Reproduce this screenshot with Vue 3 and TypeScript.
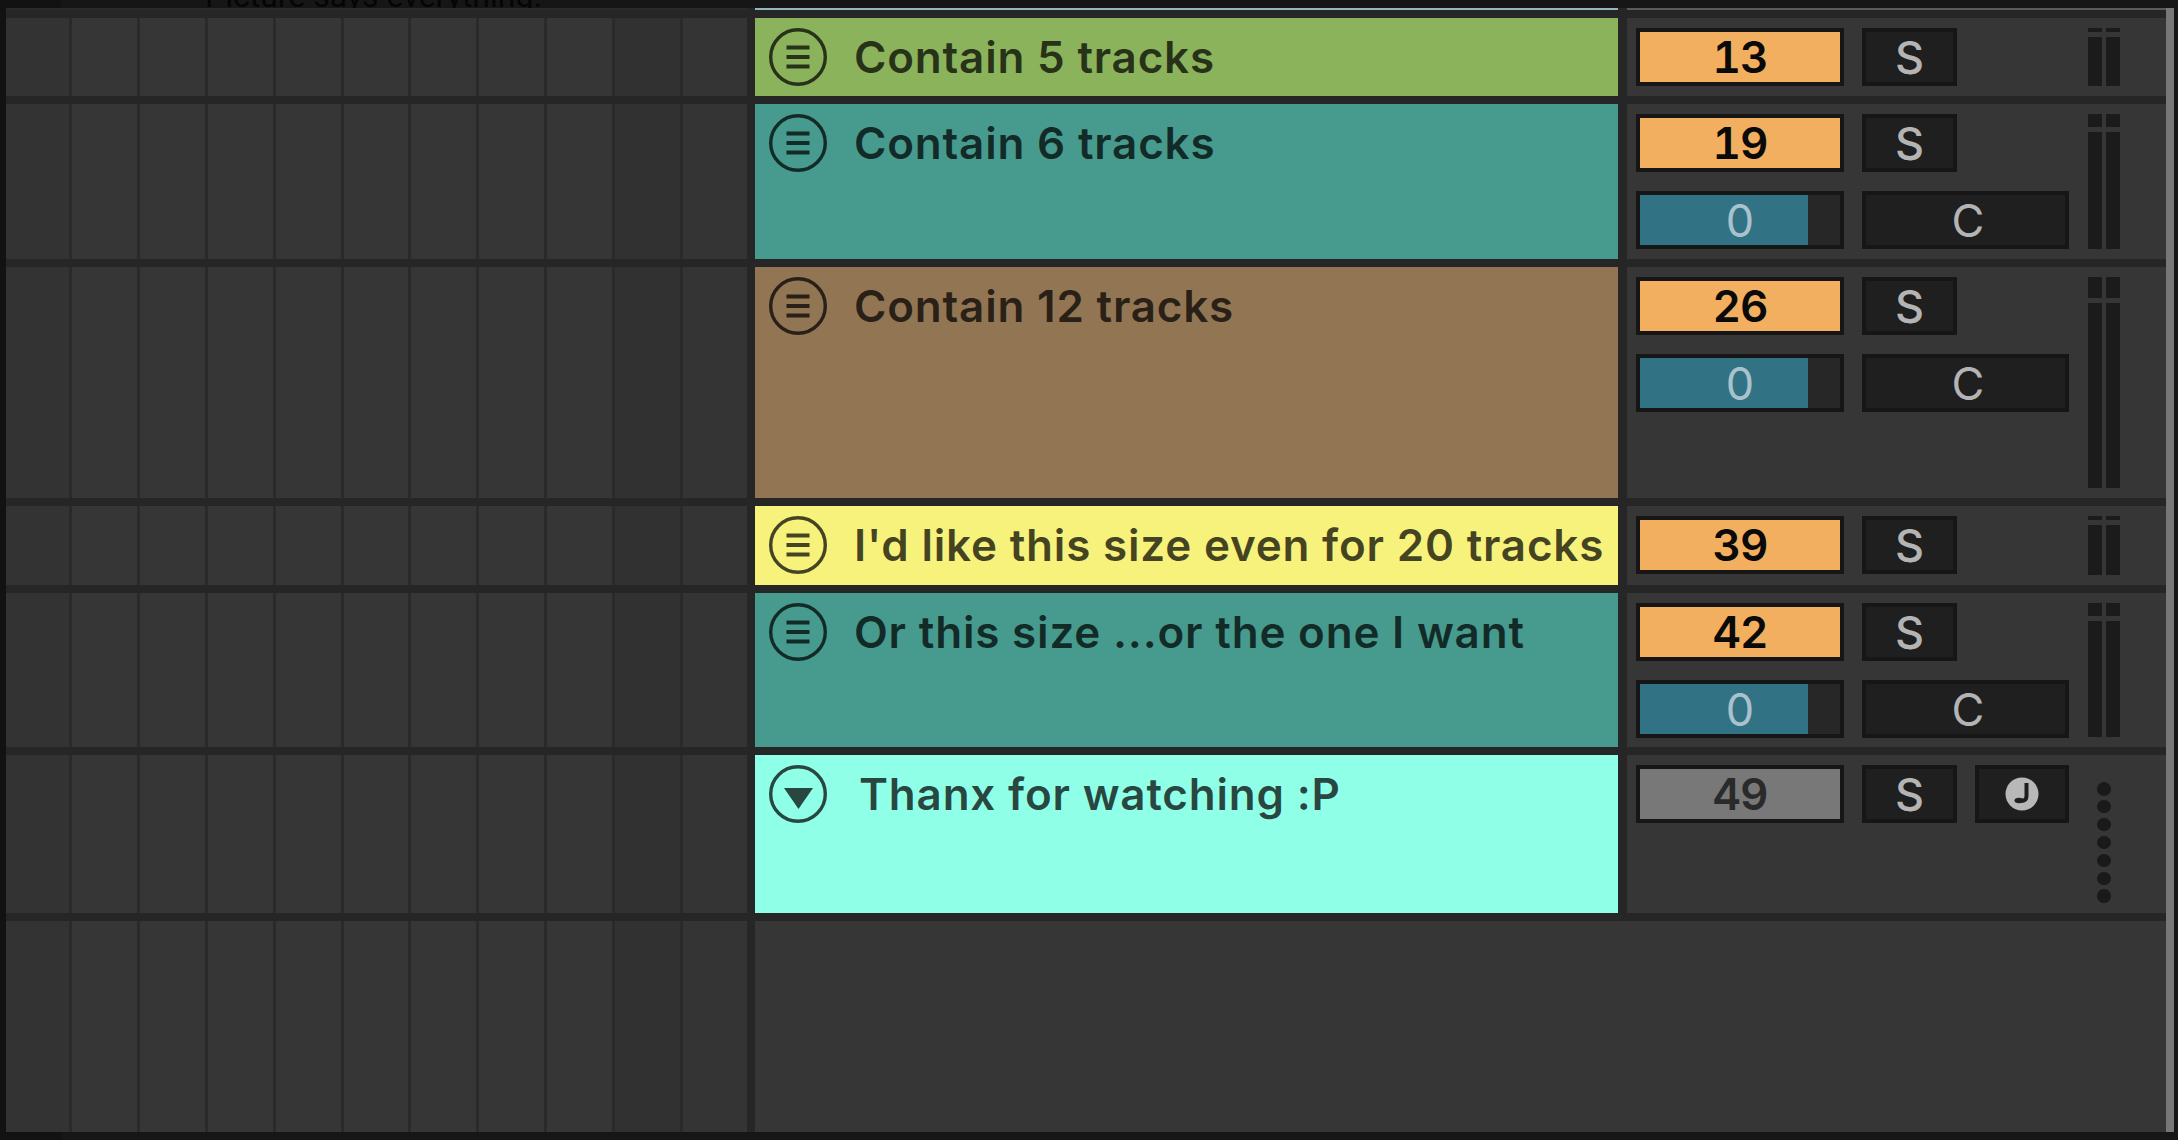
<script setup lang="ts">
interface Track {
  name: string
  color: string
  height: number
  value: number
  send: boolean
  meterCap: number
  icon: 'menu' | 'down'
  muted?: boolean
}

const tracks: Track[] = [
  { name: 'Contain 5 tracks', color: '#8bb35c', height: 78, value: 13, send: false, meterCap: 4, icon: 'menu' },
  { name: 'Contain 6 tracks', color: '#479a8e', height: 155, value: 19, send: true, meterCap: 13, icon: 'menu' },
  { name: 'Contain 12 tracks', color: '#927553', height: 231, value: 26, send: true, meterCap: 21, icon: 'menu' },
  { name: "I'd like this size even for 20 tracks", color: '#f6f27c', height: 79, value: 39, send: false, meterCap: 4, icon: 'menu' },
  { name: 'Or this size ...or the one I want', color: '#479a8e', height: 154, value: 42, send: true, meterCap: 13, icon: 'menu' },
  { name: 'Thanx for watching :P', color: '#90ffe8', height: 158, value: 49, send: false, meterCap: 0, icon: 'down', muted: true }
]

const cells = Array.from({ length: 11 }, (_, i) => i)
const dots = Array.from({ length: 7 }, (_, i) => i)
</script>

<template>
  <div class="frame">
    <div class="caption">Picture says everything.</div>
    <div class="tracks">
      <div class="row stub-row">
        <div class="grid stub-grid" />
        <div class="stub-clip" />
        <div class="stub-mixer" />
      </div>

      <div v-for="t in tracks" :key="t.value" class="row" :style="{ height: t.height + 'px' }">
        <div class="grid">
          <span v-for="c in cells" :key="c" class="cell" :class="'cell-' + c" />
        </div>
        <div class="clip" :style="{ background: t.color }">
          <svg class="clip-icon" viewBox="0 0 58 58" aria-hidden="true">
            <circle cx="29" cy="29" r="27.3" fill="none" stroke="currentColor" stroke-width="3.4" />
            <template v-if="t.icon === 'menu'">
              <path d="M17.5 19.5H40.5M17.5 29H40.5M17.5 38.5H40.5" fill="none" stroke="currentColor" stroke-width="3.8" />
            </template>
            <path v-else d="M15 23H44L29.5 44Z" fill="currentColor" />
          </svg>
          <span class="clip-name" :class="{ 'clip-name-wide': t.icon === 'down' }">{{ t.name }}</span>
        </div>
        <div class="mixer">
          <div class="controls">
            <div class="box value" :class="{ muted: t.muted }">{{ t.value }}</div>
            <div class="box toggle">S</div>
            <div v-if="t.muted" class="box toggle">
              <svg class="note" viewBox="0 0 34 34" aria-hidden="true">
                <circle cx="17" cy="17" r="16.5" fill="#b8b8b8" />
                <path d="M21.5 6V19Q21.5 24 16 24H12" fill="none" stroke="#1f1f1f" stroke-width="4" />
                <ellipse cx="14" cy="23.5" rx="4.5" ry="2.8" fill="#1f1f1f" />
              </svg>
            </div>
            <template v-if="t.send">
              <div class="box send">
                <span class="send-fill" />
                <span class="send-label">0</span>
              </div>
              <div class="box toggle wide">C</div>
            </template>
          </div>
          <div v-if="t.meterCap" class="meter">
            <div v-for="b in 2" :key="b" class="meter-bar">
              <span class="meter-cap" :style="{ height: t.meterCap + 'px' }" />
              <span class="meter-body" />
            </div>
          </div>
          <div v-else class="dots">
            <span v-for="d in dots" :key="d" class="dot" />
          </div>
        </div>
      </div>

      <div class="row empty-row">
        <div class="grid">
          <span v-for="c in cells" :key="c" class="cell" :class="'cell-' + c" />
        </div>
        <div class="empty-fill" />
      </div>
    </div>
    <div class="scrollbar" />
  </div>
</template>

<style scoped>
.frame {
  position: relative;
  box-sizing: border-box;
  display: flex;
  width: 2178px;
  height: 1140px;
  padding: 8px 4px 8px 6px;
  overflow: hidden;
  background: linear-gradient(to right, #121212 61px, #161616 61px);
  font-family: Inter, "Liberation Sans", sans-serif;
}

.caption {
  position: absolute;
  top: -24px;
  left: 205px;
  font-family: Roboto, sans-serif;
  font-size: 32px;
  line-height: 40px;
  color: #050505;
  white-space: nowrap;
}

.tracks {
  position: relative;
  flex: 1;
  display: flex;
  flex-direction: column;
  gap: 8px;
  min-width: 0;
  background: #262626;
}

.row {
  flex: none;
  display: flex;
}

.stub-row {
  height: 2px;
}

.stub-grid {
  background: #5a5a5a;
}

.stub-clip {
  width: 863px;
  margin-left: 8px;
  background: #94b6c4;
}

.stub-mixer {
  flex: 1;
  margin-left: 9px;
  background: #5a5a5a;
}

.grid {
  flex: none;
  display: grid;
  grid-template-columns: 63px repeat(9, 1fr) 64px;
  column-gap: 3px;
  width: 741px;
  background: #2a2a2a;
}

.cell {
  background: #363636;
}

.cell-0 {
  background: #333333;
}

.cell-9 {
  background: #313131;
}

.cell-10 {
  background: #343434;
}

.clip {
  flex: none;
  display: flex;
  align-items: flex-start;
  box-sizing: border-box;
  width: 863px;
  margin-left: 8px;
  padding: 10px 0 0 14px;
  color: rgba(0, 0, 0, 0.72);
}

.clip-icon {
  flex: none;
  width: 58px;
  height: 58px;
}

.clip-name {
  margin-left: 27px;
  font-size: 44px;
  font-weight: 600;
  line-height: 58px;
  letter-spacing: 0.8px;
  white-space: nowrap;
}

.clip-name-wide {
  margin-left: 32px;
}

.mixer {
  flex: 1;
  display: flex;
  gap: 19px;
  margin-left: 9px;
  padding: 10px 0 10px 9px;
  background: #363636;
}

.controls {
  flex: none;
  display: grid;
  grid-template-columns: 208px 95px 94px;
  grid-template-rows: 58px 58px;
  align-content: start;
  column-gap: 18px;
  row-gap: 19px;
}

.box {
  position: relative;
  box-sizing: border-box;
  display: flex;
  align-items: center;
  justify-content: center;
  border: 4px solid #161616;
  font-size: 45px;
  line-height: 1;
}

.value {
  grid-column: 1;
  background: #f3af60;
  color: #0a0a0a;
  font-size: 44px;
  font-weight: 600;
  font-variant-numeric: tabular-nums;
  letter-spacing: -1px;
}

.value.muted {
  background: #787878;
  color: #2a2a2a;
}

.toggle {
  background: #1f1f1f;
  color: #b4b4b4;
  font-weight: 500;
}

.wide {
  grid-column: 2 / span 2;
  grid-row: 2;
  padding-left: 5px;
  font-weight: 400;
}

.send {
  grid-column: 1;
  grid-row: 2;
  overflow: hidden;
  background: #272727;
  color: #a9c2cb;
  font-weight: 400;
}

.send-fill {
  position: absolute;
  top: 0;
  bottom: 0;
  left: 0;
  width: 168px;
  background: #327285;
}

.send-label {
  position: relative;
}

.note {
  width: 34px;
  height: 34px;
}

.meter {
  flex: none;
  display: flex;
  gap: 4px;
}

.meter-bar {
  display: flex;
  flex-direction: column;
  gap: 5px;
  width: 14px;
}

.meter-cap {
  flex: none;
  background: #1b1b1b;
}

.meter-body {
  flex: 1;
  background: #1b1b1b;
}

.dots {
  flex: none;
  display: flex;
  flex-direction: column;
  align-items: center;
  gap: 4.4px;
  width: 32px;
  padding-top: 17px;
}

.dot {
  width: 14px;
  height: 14px;
  border-radius: 50%;
  background: #1a1a1a;
}

.empty-row {
  flex: 1;
}

.empty-fill {
  flex: 1;
  margin-left: 8px;
  background: #363636;
}

.scrollbar {
  flex: none;
  width: 8px;
  background: #777777;
}
</style>
